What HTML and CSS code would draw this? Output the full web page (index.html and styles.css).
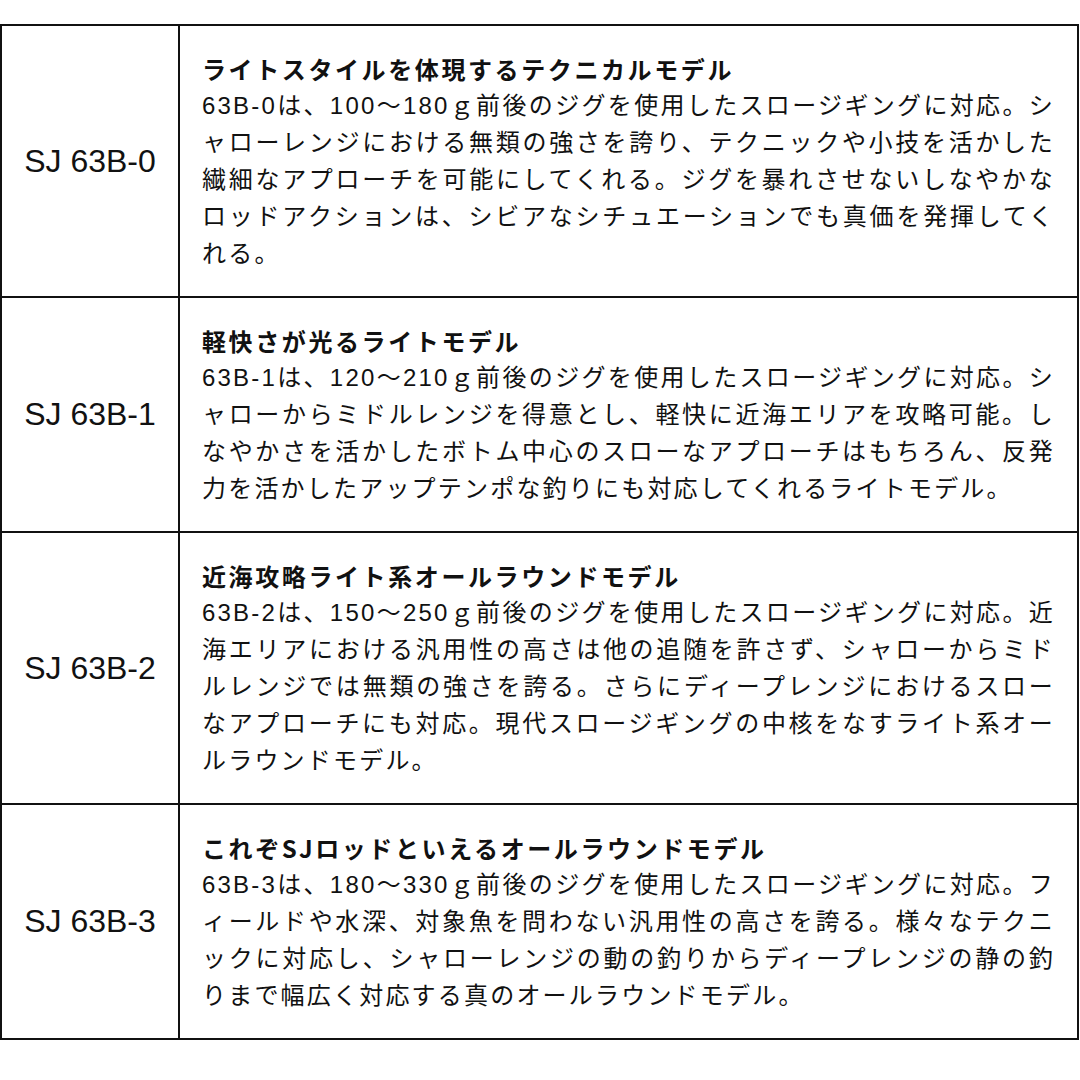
FILE: index.html
```html
<!DOCTYPE html>
<html lang="ja">
<head>
<meta charset="utf-8">
<link rel="stylesheet" href="styles.css">
</head>
<body>
<table class="spec">
  <tr>
    <td class="model">SJ 63B-0</td>
    <td class="desc"><div class="title">ライトスタイルを体現するテクニカルモデル</div>63B-0は、100〜180ｇ前後のジグを使用したスロージギングに対応。シャローレンジにおける無類の強さを誇り、テクニックや小技を活かした繊細なアプローチを可能にしてくれる。ジグを暴れさせないしなやかなロッドアクションは、シビアなシチュエーションでも真価を発揮してくれる。</td>
  </tr>
  <tr>
    <td class="model">SJ 63B-1</td>
    <td class="desc"><div class="title">軽快さが光るライトモデル</div>63B-1は、120〜210ｇ前後のジグを使用したスロージギングに対応。シャローからミドルレンジを得意とし、軽快に近海エリアを攻略可能。しなやかさを活かしたボトム中心のスローなアプローチはもちろん、反発力を活かしたアップテンポな釣りにも対応してくれるライトモデル。</td>
  </tr>
  <tr>
    <td class="model">SJ 63B-2</td>
    <td class="desc"><div class="title">近海攻略ライト系オールラウンドモデル</div>63B-2は、150〜250ｇ前後のジグを使用したスロージギングに対応。近海エリアにおける汎用性の高さは他の追随を許さず、シャローからミドルレンジでは無類の強さを誇る。さらにディープレンジにおけるスローなアプローチにも対応。現代スロージギングの中核をなすライト系オールラウンドモデル。</td>
  </tr>
  <tr>
    <td class="model">SJ 63B-3</td>
    <td class="desc"><div class="title">これぞSJロッドといえるオールラウンドモデル</div>63B-3は、180〜330ｇ前後のジグを使用したスロージギングに対応。フィールドや水深、対象魚を問わない汎用性の高さを誇る。様々なテクニックに対応し、シャローレンジの動の釣りからディープレンジの静の釣りまで幅広く対応する真のオールラウンドモデル。</td>
  </tr>
</table>
</body>
</html>
```

FILE: styles.css
```css
html, body {
  margin: 0;
  padding: 0;
  background: #fff;
}
body {
  padding-top: 24px;
}
.spec {
  border-collapse: collapse;
  width: 1079px;
  color: #111;
}
.spec td {
  border: 2px solid #111;
}
.model {
  width: 176px;
  text-align: center;
  vertical-align: middle;
  font-family: "Liberation Sans", Arial, sans-serif;
  font-size: 32px;
  padding: 0;
}
.desc {
  padding: 24px 22px 24px 22px;
  font-family: "Liberation Sans", "Noto Sans CJK JP", sans-serif;
  font-size: 24px;
  line-height: 37px;
  letter-spacing: 2.2px;
  text-align: justify;
  vertical-align: top;
}
.title {
  font-family: "Noto Sans CJK JP", sans-serif;
  font-weight: bold;
  letter-spacing: 2.6px;
}
```
